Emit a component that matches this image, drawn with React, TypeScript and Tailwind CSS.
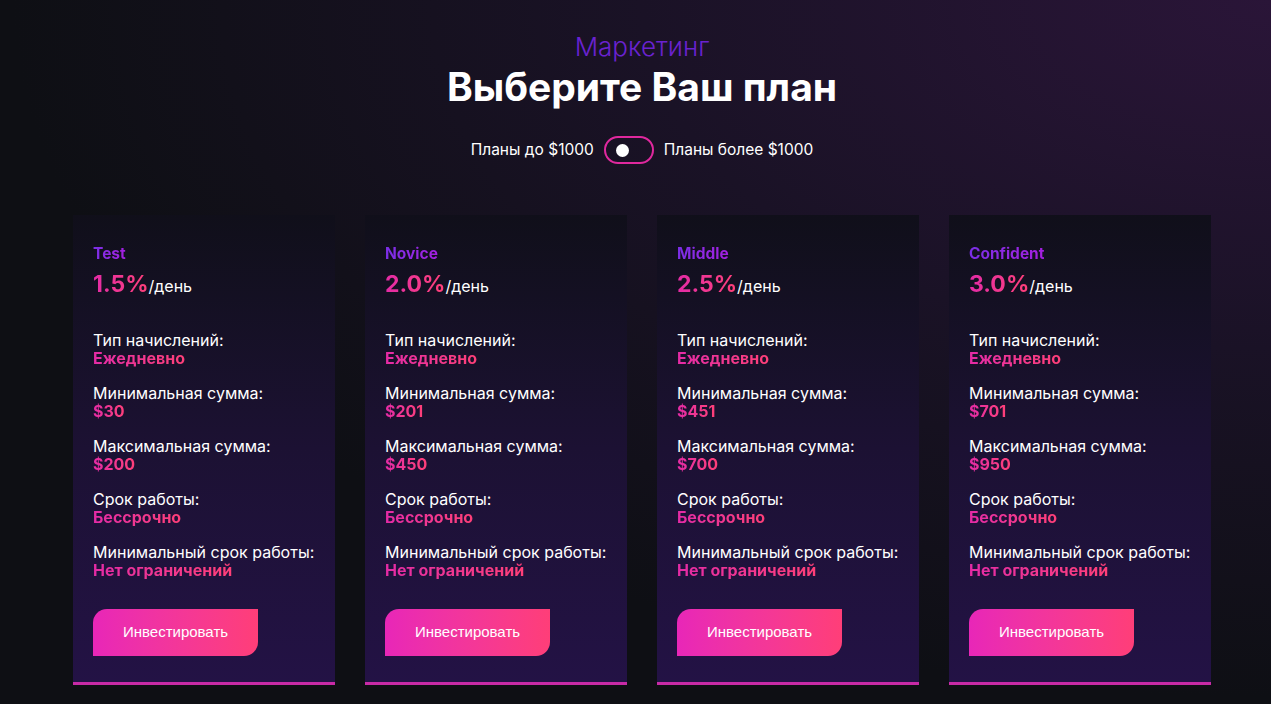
const plans = [
  { name: "Test", rate: "1.5%", min: "$30", max: "$200" },
  { name: "Novice", rate: "2.0%", min: "$201", max: "$450" },
  { name: "Middle", rate: "2.5%", min: "$451", max: "$700" },
  { name: "Confident", rate: "3.0%", min: "$701", max: "$950" },
];

const font = { fontFamily: 'Inter, "Noto Sans", sans-serif' };

const Row = ({ label, value }: { label: string; value: string }) => (
  <div className="flex flex-col">
    <span className="text-[16px] leading-[18px] text-white">{label}</span>
    <span className="text-[16px] leading-[18px] font-bold bg-gradient-to-r from-[#e42aa6] to-[#ff3f78] bg-clip-text text-transparent self-start">
      {value}
    </span>
  </div>
);

const Card = ({ plan }: { plan: (typeof plans)[number] }) => (
  <div className="w-[262px] pt-[26px] px-5 pb-[26px] border-b-[3px] border-[#c82aa6] bg-gradient-to-b from-[#100f1a] via-[#1c1133] to-[#231245]">
    <div className="text-[15.5px] leading-[18px] font-bold bg-gradient-to-r from-[#7a2ee6] to-[#a51ee0] bg-clip-text text-transparent inline-block">
      {plan.name}
    </div>
    <div className="mt-[5px] flex items-baseline">
      <span className="text-[23px] leading-[29px] font-bold bg-gradient-to-r from-[#e42aa6] to-[#ff3f78] bg-clip-text text-transparent">
        {plan.rate}
      </span>
      <span className="text-[16px] text-white">/день</span>
    </div>
    <div className="mt-[32px] flex flex-col gap-[17px]">
      <Row label="Тип начислений:" value="Ежедневно" />
      <Row label="Минимальная сумма:" value={plan.min} />
      <Row label="Максимальная сумма:" value={plan.max} />
      <Row label="Срок работы:" value="Бессрочно" />
      <Row label="Минимальный срок работы:" value="Нет ограничений" />
    </div>
    <button
      className="mt-[30px] w-[165px] h-[47px] rounded-tl-[14px] rounded-br-[14px] bg-gradient-to-r from-[#e826b8] to-[#ff3e78] text-white text-[15px]"
      style={{ fontFamily: '"Liberation Sans", Arial, sans-serif' }}
    >
      Инвестировать
    </button>
  </div>
);

export default function App() {
  return (
    <div
      className="w-full min-h-[704px] pl-[13px] bg-[#0e0f14] bg-[radial-gradient(ellipse_at_top_right,#2a1538_0%,#1a1226_35%,#0e0f14_70%)] flex flex-col items-center overflow-hidden"
      style={font}
    >
      <div className="mt-[31px] text-[26px] leading-[32px] font-light text-[#6a22d0]">Маркетинг</div>
      <h1 className="mt-[1px] text-[39px] leading-[46px] font-bold text-white">Выберите Ваш план</h1>
      <div className="mt-[26px] flex items-center gap-[10px] text-[15.5px] text-white">
        <span>Планы до $1000</span>
        <div className="w-[50px] h-[28px] rounded-full border-2 border-[#e0289e] flex items-center pl-[10px]">
          <div className="w-[13px] h-[13px] rounded-full bg-white" />
        </div>
        <span>Планы более $1000</span>
      </div>
      <div className="mt-[51px] flex gap-[30px]">
        {plans.map((p) => (
          <Card key={p.name} plan={p} />
        ))}
      </div>
    </div>
  );
}
